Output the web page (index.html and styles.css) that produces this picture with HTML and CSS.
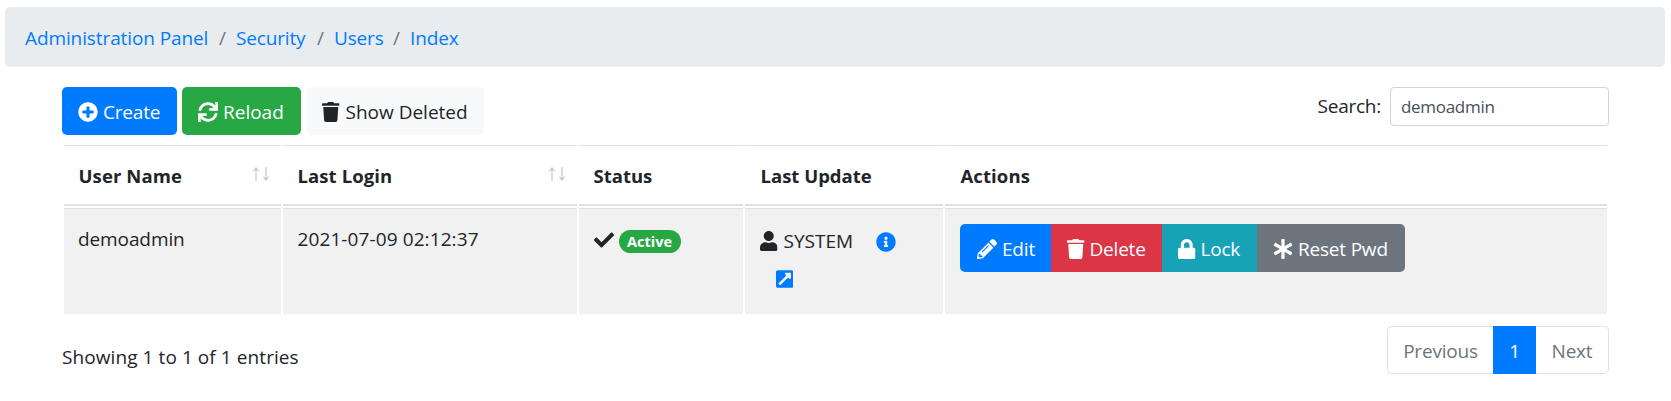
FILE: index.html
```
<!DOCTYPE html>
<html lang="en">
<head>
<meta charset="utf-8">
<title>Users</title>
<link rel="stylesheet" href="styles.css">
</head>
<body>
<svg class="sprite" aria-hidden="true">
  <symbol id="plus" viewBox="0 0 512 512"><path d="M256 8C119 8 8 119 8 256s111 248 248 248 248-111 248-248S393 8 256 8zm144 276c0 6.600-5.400 12-12 12h-92v92c0 6.600-5.400 12-12 12h-56c-6.600 0-12-5.400-12-12v-92h-92c-6.600 0-12-5.400-12-12v-56c0-6.600 5.400-12 12-12h92v-92c0-6.600 5.400-12 12-12h56c6.600 0 12 5.400 12 12v92h92c6.600 0 12 5.400 12 12v56z"/></symbol>
  <symbol id="sync" viewBox="0 0 512 512"><path d="M440.650 12.570l4 82.770A247.160 247.160 0 0 0 255.830 8C134.730 8 33.910 94.920 12.290 209.820A12 12 0 0 0 24.090 224h49.050a12 12 0 0 0 11.670-9.260 175.910 175.910 0 0 1 317-56.940l-101.460-4.860a12 12 0 0 0-12.570 12v47.410a12 12 0 0 0 12 12H500a12 12 0 0 0 12-12V12a12 12 0 0 0-12-12h-47.370a12 12 0 0 0-11.980 12.570zM255.830 432a175.610 175.610 0 0 1-146-77.800l101.800 4.870a12 12 0 0 0 12.570-12v-47.400a12 12 0 0 0-12-12H12a12 12 0 0 0-12 12V500a12 12 0 0 0 12 12h47.350a12 12 0 0 0 12-12.600l-4.150-82.570A247.170 247.170 0 0 0 255.830 504c121.110 0 221.930-86.920 243.550-201.820a12 12 0 0 0-11.800-14.180h-49.050a12 12 0 0 0-11.670 9.260A175.860 175.860 0 0 1 255.830 432z"/></symbol>
  <symbol id="trash" viewBox="0 0 448 512"><path d="M432 32H312l-9.400-18.700A24 24 0 0 0 281.100 0H166.800a23.720 23.720 0 0 0-21.400 13.300L136 32H16A16 16 0 0 0 0 48v32a16 16 0 0 0 16 16h416a16 16 0 0 0 16-16V48a16 16 0 0 0-16-16zM53.200 467a48 48 0 0 0 47.900 45h245.800a48 48 0 0 0 47.900-45L416 128H32z"/></symbol>
  <symbol id="check" viewBox="0 0 512 512"><path d="M173.898 439.404l-166.400-166.400c-9.997-9.997-9.997-26.206 0-36.204l36.203-36.204c9.997-9.998 26.207-9.998 36.204 0L192 312.690 432.095 72.596c9.997-9.997 26.207-9.997 36.204 0l36.203 36.204c9.997 9.997 9.997 26.206 0 36.204l-294.400 294.401c-9.998 9.997-26.207 9.997-36.204-.001z"/></symbol>
  <symbol id="user" viewBox="0 0 448 512"><path d="M224 256c70.700 0 128-57.300 128-128S294.700 0 224 0 96 57.300 96 128s57.300 128 128 128zm89.600 32h-16.700c-22.200 10.200-46.900 16-72.900 16s-50.600-5.800-72.900-16h-16.700C60.200 288 0 348.200 0 422.400V464c0 26.500 21.500 48 48 48h352c26.500 0 48-21.500 48-48v-41.600c0-74.200-60.200-134.400-134.400-134.400z"/></symbol>
  <symbol id="info" viewBox="0 0 512 512"><path d="M256 8C119.043 8 8 119.083 8 256c0 136.997 111.043 248 248 248s248-111.003 248-248C504 119.083 392.957 8 256 8zm0 110c23.196 0 42 18.804 42 42s-18.804 42-42 42-42-18.804-42-42 18.804-42 42-42zm56 254c0 6.627-5.373 12-12 12h-88c-6.627 0-12-5.373-12-12v-24c0-6.627 5.373-12 12-12h12v-64h-12c-6.627 0-12-5.373-12-12v-24c0-6.627 5.373-12 12-12h64c6.627 0 12 5.373 12 12v100h12c6.627 0 12 5.373 12 12v24z"/></symbol>
  <symbol id="external" viewBox="0 0 448 512"><path d="M448 80v352c0 26.510-21.490 48-48 48H48c-26.510 0-48-21.490-48-48V80c0-26.510 21.490-48 48-48h352c26.510 0 48 21.490 48 48zm-88 16H248.029c-21.313 0-32.080 25.861-16.971 40.971l31.984 31.987L67.515 364.485c-4.686 4.686-4.686 12.284 0 16.971l31.029 31.029c4.687 4.686 12.285 4.686 16.971 0l195.526-195.526 31.988 31.991C358.058 264.977 384 254.425 384 232.963V120c0-13.255-10.745-24-24-24z"/></symbol>
  <symbol id="pencil" viewBox="0 0 512 512"><path d="M497.900 142.100l-46.100 46.100c-4.700 4.700-12.300 4.700-17 0l-111-111c-4.700-4.700-4.700-12.300 0-17l46.100-46.100c18.700-18.700 49.100-18.700 67.900 0l60.100 60.100c18.800 18.700 18.800 49.100 0 67.900zM284.200 99.800L21.600 362.400.4 483.900c-2.900 16.400 11.400 30.600 27.800 27.800l121.500-21.300 262.600-262.600c4.700-4.700 4.700-12.300 0-17l-111-111c-4.800-4.700-12.400-4.700-17.100 0zM124.100 339.900c-5.500-5.500-5.500-14.300 0-19.800l154-154c5.500-5.500 14.300-5.500 19.800 0s5.500 14.300 0 19.800l-154 154c-5.500 5.500-14.300 5.500-19.800 0zM88 424h48v36.300l-64.500 11.300-31.100-31.100L51.700 376H88v48z"/></symbol>
  <symbol id="lock" viewBox="0 0 448 512"><path d="M400 224h-24v-72C376 68.200 307.800 0 224 0S72 68.200 72 152v72H48c-26.500 0-48 21.500-48 48v192c0 26.500 21.500 48 48 48h352c26.500 0 48-21.500 48-48V272c0-26.500-21.500-48-48-48zm-104 0H152v-72c0-39.700 32.300-72 72-72s72 32.300 72 72v72z"/></symbol>
  <symbol id="asterisk" viewBox="0 0 512 512"><path d="M478.210 334.093L336 256l142.210-78.093c11.795-6.477 15.961-21.384 9.232-33.037l-19.480-33.741c-6.728-11.653-21.720-15.499-33.227-8.523L296 186.718l3.475-162.204C299.763 11.061 288.937 0 275.480 0h-38.960c-13.456 0-24.283 11.061-23.994 24.514L216 186.718 77.265 102.607c-11.506-6.976-26.499-3.130-33.227 8.523l-19.480 33.741c-6.728 11.653-2.562 26.560 9.233 33.037L176 256 33.790 334.093c-11.795 6.477-15.961 21.384-9.232 33.037l19.480 33.741c6.728 11.653 21.721 15.499 33.227 8.523L216 325.282l-3.475 162.204C212.237 500.939 223.064 512 236.520 512h38.961c13.456 0 24.283-11.061 23.995-24.514L296 325.282l138.735 84.111c11.506 6.976 26.499 3.130 33.227-8.523l19.480-33.741c6.728-11.653 2.563-26.559-9.232-33.036z"/></symbol>
  <symbol id="sort" viewBox="0 0 18 14"><path d="M4 14V2M1.500 4L4 1l2.500 3M14 0v12M11.500 10l2.500 3 2.500-3" fill="none" stroke="currentColor" stroke-width="1.300"/></symbol>
</svg>

<nav class="breadcrumb">
  <a class="crumb crumb-panel" href="#">Administration Panel</a><span class="slash">/</span>
  <a class="crumb crumb-security" href="#">Security</a><span class="slash">/</span>
  <a class="crumb crumb-users" href="#">Users</a><span class="slash">/</span>
  <a class="crumb" href="#">Index</a>
</nav>

<main class="content">
  <div class="toolbar">
    <div class="buttons">
      <button class="btn blue create"><svg class="icon"><use href="#plus"/></svg><span>Create</span></button>
      <button class="btn green reload"><svg class="icon"><use href="#sync"/></svg><span>Reload</span></button>
      <button class="btn light deleted"><svg class="icon narrow"><use href="#trash"/></svg><span class="wide">Show Deleted</span></button>
    </div>
    <label class="search"><span>Search:</span><input class="field" type="text" value="demoadmin"></label>
  </div>

  <table class="table">
    <colgroup><col class="c1"><col class="c2"><col class="c3"><col class="c4"><col class="c5"></colgroup>
    <thead>
      <tr>
        <th><div class="head">User Name<svg class="sort"><use href="#sort"/></svg></div></th>
        <th><div class="head">Last Login<svg class="sort"><use href="#sort"/></svg></div></th>
        <th><div class="head tight">Status</div></th>
        <th><div class="head tight inset">Last Update</div></th>
        <th><div class="head inset">Actions</div></th>
      </tr>
    </thead>
    <tbody>
      <tr>
        <td class="account">demoadmin</td>
        <td class="date">2021-07-09 02:12:37</td>
        <td><div class="status"><svg class="icon"><use href="#check"/></svg><span class="badge">Active</span></div></td>
        <td>
          <div class="update"><svg class="icon narrow"><use href="#user"/></svg><span class="name">SYSTEM</span><svg class="icon link info"><use href="#info"/></svg></div>
          <div class="open"><svg class="icon narrow link"><use href="#external"/></svg></div>
        </td>
        <td>
          <div class="group">
            <button class="btn blue edit"><svg class="icon"><use href="#pencil"/></svg><span>Edit</span></button>
            <button class="btn red delete"><svg class="icon narrow"><use href="#trash"/></svg><span>Delete</span></button>
            <button class="btn teal lock"><svg class="icon narrow"><use href="#lock"/></svg><span>Lock</span></button>
            <button class="btn gray reset"><svg class="icon"><use href="#asterisk"/></svg><span>Reset Pwd</span></button>
          </div>
        </td>
      </tr>
    </tbody>
  </table>

  <div class="footer">
    <div class="summary">Showing 1 to 1 of 1 entries</div>
    <div class="pages">
      <span class="page prev">Previous</span><span class="page current">1</span><span class="page next">Next</span>
    </div>
  </div>
</main>
</body>
</html>
```
FILE: styles.css
```
* { box-sizing: border-box; }
body {
  margin: 0;
  padding: 7px 6px 0 5px;
  background: #fff;
  color: #212529;
  font: 19px/30px "Open Sans", "Noto Sans", sans-serif;
  overflow: hidden;
}
.sprite { display: none; }

.breadcrumb {
  display: flex;
  height: 60px;
  padding: 16px 20px 14px;
  border-radius: 5px;
  background: #e9ecef;
  letter-spacing: -0.15px;
}
.crumb { color: #007bff; text-decoration: none; }
.crumb-panel { width: 184px; letter-spacing: -0.1px; white-space: nowrap; }
.crumb-security { width: 71px; }
.crumb-users { width: 49px; }
.slash { width: 27px; text-align: center; color: #6c757d; }

.content { padding: 20px 56px 0 57px; }
.toolbar { display: flex; justify-content: space-between; align-items: flex-start; }
.buttons { display: flex; gap: 5px; }

.btn {
  display: flex;
  align-items: center;
  gap: 5px;
  height: 48px;
  padding: 1px 0 0 16px;
  border: 0;
  border-radius: 5px;
  color: #fff;
  font: inherit;
  letter-spacing: -0.2px;
  white-space: nowrap;
}
.reload { letter-spacing: 0; }
.btn .wide { margin-left: 1px; letter-spacing: 0; }
.icon { display: block; flex: none; width: 20px; height: 20px; fill: currentColor; }
.icon.narrow { width: 17.5px; }
.blue { background: #007bff; }
.green { background: #28a745; }
.light { background: #f8f9fa; color: #212529; }
.red { background: #dc3545; }
.teal { background: #17a2b8; }
.gray { background: #6c757d; }
.create { width: 115px; }
.reload { width: 119px; }
.deleted { width: 178px; }

.search { display: flex; gap: 9px; letter-spacing: -0.25px; line-height: 38px; }
.field {
  width: 219px;
  height: 39px;
  padding: 0 10px;
  border: 1px solid #ced4da;
  border-radius: 4px;
  background: #fff;
  color: #495057;
  font: 17px "Open Sans", "Noto Sans", sans-serif;
  letter-spacing: -0.3px;
}

.table {
  width: 1547px;
  margin-top: 8px;
  border-collapse: separate;
  border-spacing: 2px;
  table-layout: fixed;
}
.c1 { width: 217px; }
.c2 { width: 294px; }
.c3 { width: 164px; }
.c4 { width: 198px; }
.c5 { width: 662px; }
th {
  height: 61px;
  padding: 2px 10px 0 14.5px;
  border-top: 1px solid #dee2e6;
  border-bottom: 2px solid #dee2e6;
  font-size: 18.5px;
  text-align: left;
}
.head { display: flex; justify-content: space-between; align-items: center; letter-spacing: 0.1px; }
.head.tight { letter-spacing: 0; }
.head.inset { padding-left: 1px; }
.sort { width: 18px; height: 14px; margin: 0 1px 5px 0; color: #c8c9ca; }
td {
  height: 106px;
  padding: 15px;
  border-top: 1px solid #dee2e6;
  background: #f1f1f1;
  vertical-align: top;
}
.account { padding-left: 14px; letter-spacing: -0.1px; }
.date { padding-left: 14.5px; letter-spacing: 0.1px; }
.status { display: flex; gap: 5px; align-items: center; }
.status .icon { margin: 2px 0 0 -0.5px; }
.badge {
  width: 62px;
  height: 23px;
  margin-top: 6px;
  border-radius: 12px;
  background: #28a745;
  color: #fff;
  font-size: 14.5px;
  font-weight: 700;
  line-height: 23px;
  text-align: center;
}
.update { display: flex; align-items: center; margin-top: 2px; }
.name { width: 92px; margin-left: 6px; }
.link { color: #007bff; }
.info { margin-top: 2px; }
.open { padding: 13px 0 0 15.5px; }
.group { display: flex; }
.group .btn { border-radius: 0; }
.group .btn:first-child { border-radius: 5px 0 0 5px; }
.group .btn:last-child { border-radius: 0 5px 5px 0; }
.group .edit { width: 91px; padding-left: 17px; }
.delete { width: 111px; }
.lock { width: 95px; }
.reset { width: 148px; }

.footer { display: flex; justify-content: space-between; margin-top: 10px; }
.summary { padding-top: 16px; letter-spacing: 0.08px; }
.pages { display: flex; color: #6c757d; letter-spacing: -0.2px; }
.page {
  height: 48px;
  padding: 9px 0 7px;
  border: 1px solid #dee2e6;
  text-align: center;
}
.prev { width: 106px; border-right: 0; border-radius: 5px 0 0 5px; }
.current { width: 43px; border-color: #007bff; background: #007bff; color: #fff; }
.next { width: 73px; border-left: 0; border-radius: 0 5px 5px 0; }
```
